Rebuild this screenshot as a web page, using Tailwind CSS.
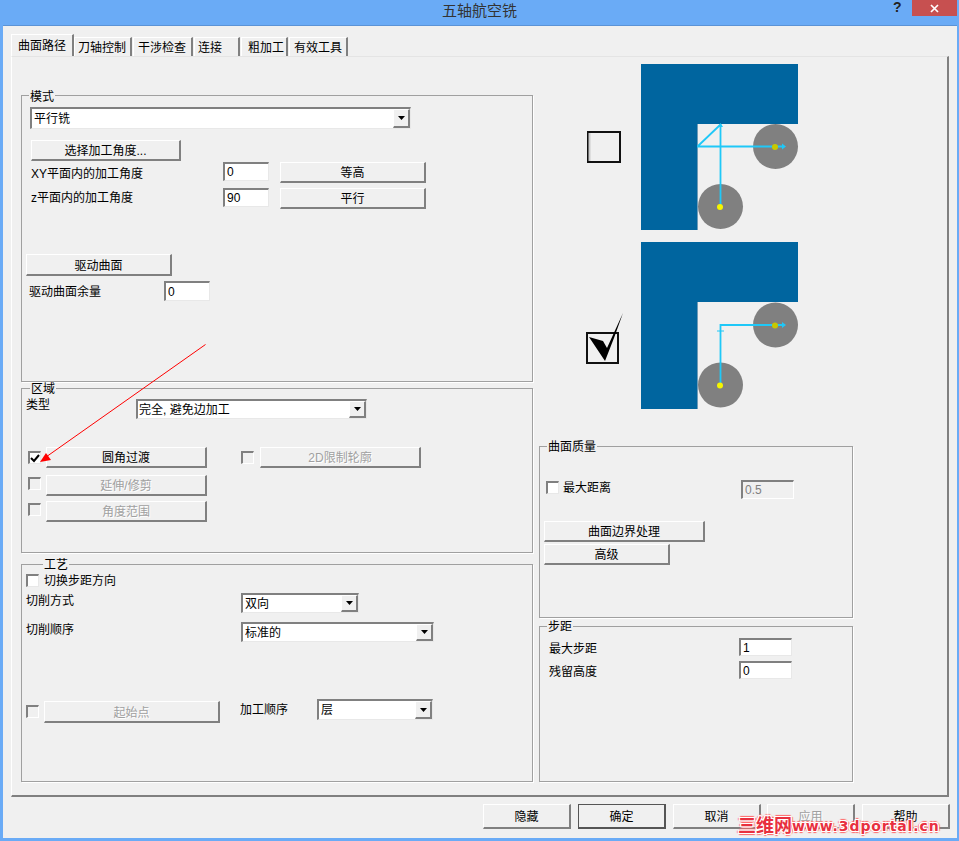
<!DOCTYPE html>
<html lang="zh-CN">
<head>
<meta charset="UTF-8">
<meta name="viewport" content="width=device-width, initial-scale=1.0">
<title>五轴航空铣</title>
<script src="https://cdn.jsdelivr.net/npm/@tailwindcss/browser@4"></script>
</head>
<body class="m-0 overflow-hidden">
<div class="relative w-[959px] h-[841px] overflow-hidden bg-[#6aabf6] text-[12px] leading-[12px] text-black [font-family:'Liberation_Sans','Noto_Sans_CJK_SC',sans-serif]">

  <!-- title bar -->
  <div class="relative h-[25px] flex justify-center pt-[2px] border-b border-transparent">
    <span class="text-[15px] leading-[18px] text-[#333]">五轴航空铣</span>
    <span class="absolute left-[893px] top-0 text-[14px] leading-[14px] font-bold text-[#222]">?</span>
    <div class="absolute left-[912px] top-0 w-[45px] h-[16px] bg-[#c75050] flex items-center justify-center">
      <svg width="9" height="9" viewBox="0 0 9 9"><path d="M1 1L8 8M8 1L1 8" stroke="#fff" stroke-width="1.7"/></svg>
    </div>
  </div>

  <!-- dialog body -->
  <div class="w-[954px] h-[813px] ml-[3px] bg-[#f0f0f0] border-t border-[#5b93d6] pt-[8px]">
    <!-- tabs -->
    <div class="flex items-end h-[22px] ml-[8px]">
      <div class="w-[63px] h-[22px] pl-[6px] pt-[5px] bg-[#f0f0f0] border-t border-l border-white border-r-2 border-r-[#808080]">曲面路径</div>
      <div class="w-[58px] h-[19px] pl-[3px] pt-[4px] border-t border-l border-white border-r-2 border-r-[#808080]">刀轴控制</div>
      <div class="w-[60px] h-[19px] ml-[1px] pl-[4px] pt-[4px] border-t border-l border-white border-r-2 border-r-[#808080]">干涉检查</div>
      <div class="w-[46px] h-[19px] ml-[1px] pl-[3px] pt-[4px] border-t border-l border-white border-r-2 border-r-[#808080]">连接</div>
      <div class="w-[47px] h-[19px] ml-[1px] pl-[6px] pt-[4px] border-t border-l border-white border-r-2 border-r-[#808080]">粗加工</div>
      <div class="w-[59px] h-[19px] ml-[1px] pl-[4px] pt-[4px] border-t border-l border-white border-r-2 border-r-[#808080]">有效工具</div>
    </div>

    <!-- tab panel -->
    <div class="flex w-[938px] h-[741px] ml-[8px] pl-[9px] pt-[38px] border-t border-l border-t-[#e4e4e4] border-l-white border-r-2 border-b-2 border-r-[#808080] border-b-[#808080]">

      <!-- left column -->
      <div class="flex flex-col w-[512px] shrink-0">

        <!-- 模式 -->
        <div class="relative h-[287px] border border-[#a0a0a0] shadow-[1px_1px_0_#fff]">
          <span class="absolute -top-[5px] left-[7px] px-[1px] bg-[#f0f0f0]">模式</span>
          <div class="relative w-[381px] h-[22px] ml-[8px] mt-[11px] pl-[2px] flex items-center bg-white border-t-2 border-l-2 border-t-[#808080] border-l-[#808080] border-r border-b border-r-[#e8e8e8] border-b-[#e8e8e8]">平行铣
            <div class="absolute right-0 top-0 w-[17px] h-[19px] bg-[#f0f0f0] border-t border-l border-white border-r-2 border-b-2 border-r-[#808080] border-b-[#808080] flex items-center justify-center">
              <svg width="7" height="4" viewBox="0 0 7 4"><path d="M0 0H7L3.5 4Z" fill="#000"/></svg>
            </div>
          </div>
          <div class="w-[150px] h-[21px] ml-[9px] mt-[11px] pt-[2px] flex items-center justify-center bg-[#f0f0f0] border-t border-l border-white border-r-2 border-b-2 border-r-[#808080] border-b-[#808080]">选择加工角度...</div>
          <div class="flex ml-[9px] mt-[1px]">
            <span class="w-[192px] mt-[6px]">XY平面内的加工角度</span>
            <input value="0" class="w-[46px] h-[19px] pl-[2px] bg-white outline-none border-t-2 border-l-2 border-t-[#808080] border-l-[#808080] border-r border-b border-r-[#e8e8e8] border-b-[#e8e8e8]">
            <div class="w-[146px] h-[21px] ml-[11px] pt-[2px] flex items-center justify-center border-t border-l border-white border-r-2 border-b-2 border-r-[#808080] border-b-[#808080]">等高</div>
          </div>
          <div class="flex ml-[9px] mt-[5px]">
            <span class="w-[192px] mt-[4px]">z平面内的加工角度</span>
            <input value="90" class="w-[46px] h-[19px] pl-[2px] bg-white outline-none border-t-2 border-l-2 border-t-[#808080] border-l-[#808080] border-r border-b border-r-[#e8e8e8] border-b-[#e8e8e8]">
            <div class="w-[146px] h-[21px] ml-[11px] pt-[2px] flex items-center justify-center border-t border-l border-white border-r-2 border-b-2 border-r-[#808080] border-b-[#808080]">平行</div>
          </div>
          <div class="w-[146px] h-[22px] ml-[4px] mt-[45px] pt-[2px] flex items-center justify-center border-t border-l border-white border-r-2 border-b-2 border-r-[#808080] border-b-[#808080]">驱动曲面</div>
          <div class="flex ml-[7px] mt-[5px]">
            <span class="w-[135px] mt-[5px]">驱动曲面余量</span>
            <input value="0" class="w-[46px] h-[20px] pl-[2px] bg-white outline-none border-t-2 border-l-2 border-t-[#808080] border-l-[#808080] border-r border-b border-r-[#e8e8e8] border-b-[#e8e8e8]">
          </div>
        </div>

        <!-- 区域 -->
        <div class="relative h-[165px] mt-[6px] border border-[#a0a0a0] shadow-[1px_1px_0_#fff]">
          <span class="absolute -top-[6px] left-[8px] px-[1px] bg-[#f0f0f0]">区域</span>
          <div class="flex ml-[4px] mt-[10px]">
            <span class="w-[110px]">类型</span>
            <div class="relative w-[231px] h-[20px] pl-[1px] flex items-center bg-white border-t-2 border-l-2 border-t-[#808080] border-l-[#808080] border-r border-b border-r-[#e8e8e8] border-b-[#e8e8e8]">完全, 避免边加工
              <div class="absolute right-0 top-0 w-[17px] h-[17px] bg-[#f0f0f0] border-t border-l border-white border-r-2 border-b-2 border-r-[#808080] border-b-[#808080] flex items-center justify-center">
                <svg width="7" height="4" viewBox="0 0 7 4"><path d="M0 0H7L3.5 4Z" fill="#000"/></svg>
              </div>
            </div>
          </div>
          <div class="flex ml-[6px] mt-[28px]">
            <div class="w-[13px] h-[13px] mt-[4px] flex items-center justify-center bg-white border-t-2 border-l-2 border-t-[#808080] border-l-[#808080] border-r border-b border-r-[#e8e8e8] border-b-[#e8e8e8]">
              <svg width="10" height="9" viewBox="0 0 10 9"><path d="M1 4L4 7L9 1" fill="none" stroke="#000" stroke-width="2"/></svg>
            </div>
            <div class="w-[161px] h-[21px] ml-[5px] pt-[2px] flex items-center justify-center border-t border-l border-white border-r-2 border-b-2 border-r-[#808080] border-b-[#808080]">圆角过渡</div>
            <div class="w-[13px] h-[13px] mt-[4px] ml-[34px] bg-[#f0f0f0] border-t-2 border-l-2 border-t-[#808080] border-l-[#808080] border-r border-b border-r-white border-b-white"></div>
            <div class="w-[161px] h-[21px] ml-[6px] pt-[2px] flex items-center justify-center text-[#a0a0a0] [text-shadow:1px_1px_0_#fff] border-t border-l border-white border-r-2 border-b-2 border-r-[#808080] border-b-[#808080]">2D限制轮廓</div>
          </div>
          <div class="flex ml-[6px] mt-[7px]">
            <div class="w-[13px] h-[13px] mt-[2px] bg-[#f0f0f0] border-t-2 border-l-2 border-t-[#808080] border-l-[#808080] border-r border-b border-r-white border-b-white"></div>
            <div class="w-[161px] h-[21px] ml-[5px] pt-[2px] flex items-center justify-center text-[#a0a0a0] [text-shadow:1px_1px_0_#fff] border-t border-l border-white border-r-2 border-b-2 border-r-[#808080] border-b-[#808080]">延伸/修剪</div>
          </div>
          <div class="flex ml-[6px] mt-[5px]">
            <div class="w-[13px] h-[13px] mt-[2px] bg-[#f0f0f0] border-t-2 border-l-2 border-t-[#808080] border-l-[#808080] border-r border-b border-r-white border-b-white"></div>
            <div class="w-[161px] h-[21px] ml-[5px] pt-[2px] flex items-center justify-center text-[#a0a0a0] [text-shadow:1px_1px_0_#fff] border-t border-l border-white border-r-2 border-b-2 border-r-[#808080] border-b-[#808080]">角度范围</div>
          </div>
        </div>

        <!-- 工艺 -->
        <div class="relative h-[218px] mt-[11px] border border-[#a0a0a0] shadow-[1px_1px_0_#fff]">
          <span class="absolute -top-[6px] left-[21px] px-[1px] bg-[#f0f0f0]">工艺</span>
          <div class="flex ml-[4px] mt-[9px]">
            <div class="w-[13px] h-[13px] bg-white border-t-2 border-l-2 border-t-[#808080] border-l-[#808080] border-r border-b border-r-[#e8e8e8] border-b-[#e8e8e8]"></div>
            <span class="ml-[5px] mt-[1px]">切换步距方向</span>
          </div>
          <div class="flex ml-[4px] mt-[6px]">
            <span class="w-[215px] mt-[2px]">切削方式</span>
            <div class="relative w-[118px] h-[20px] pl-[2px] flex items-center bg-white border-t-2 border-l-2 border-t-[#808080] border-l-[#808080] border-r border-b border-r-[#e8e8e8] border-b-[#e8e8e8]">双向
              <div class="absolute right-0 top-0 w-[17px] h-[17px] bg-[#f0f0f0] border-t border-l border-white border-r-2 border-b-2 border-r-[#808080] border-b-[#808080] flex items-center justify-center">
                <svg width="7" height="4" viewBox="0 0 7 4"><path d="M0 0H7L3.5 4Z" fill="#000"/></svg>
              </div>
            </div>
          </div>
          <div class="flex ml-[4px] mt-[9px]">
            <span class="w-[215px] mt-[2px]">切削顺序</span>
            <div class="relative w-[193px] h-[20px] pl-[2px] flex items-center bg-white border-t-2 border-l-2 border-t-[#808080] border-l-[#808080] border-r border-b border-r-[#e8e8e8] border-b-[#e8e8e8]">标准的
              <div class="absolute right-0 top-0 w-[17px] h-[17px] bg-[#f0f0f0] border-t border-l border-white border-r-2 border-b-2 border-r-[#808080] border-b-[#808080] flex items-center justify-center">
                <svg width="7" height="4" viewBox="0 0 7 4"><path d="M0 0H7L3.5 4Z" fill="#000"/></svg>
              </div>
            </div>
          </div>
          <div class="flex ml-[4px] mt-[57px]">
            <div class="w-[13px] h-[13px] mt-[6px] bg-[#f0f0f0] border-t-2 border-l-2 border-t-[#808080] border-l-[#808080] border-r border-b border-r-white border-b-white"></div>
            <div class="w-[176px] h-[22px] ml-[5px] mt-[2px] pt-[2px] flex items-center justify-center text-[#a0a0a0] [text-shadow:1px_1px_0_#fff] border-t border-l border-white border-r-2 border-b-2 border-r-[#808080] border-b-[#808080]">起始点</div>
            <span class="w-[77px] ml-[20px] mt-[5px]">加工顺序</span>
            <div class="relative w-[116px] h-[21px] pl-[2px] flex items-center bg-white border-t-2 border-l-2 border-t-[#808080] border-l-[#808080] border-r border-b border-r-[#e8e8e8] border-b-[#e8e8e8]">层
              <div class="absolute right-0 top-0 w-[17px] h-[18px] bg-[#f0f0f0] border-t border-l border-white border-r-2 border-b-2 border-r-[#808080] border-b-[#808080] flex items-center justify-center">
                <svg width="7" height="4" viewBox="0 0 7 4"><path d="M0 0H7L3.5 4Z" fill="#000"/></svg>
              </div>
            </div>
          </div>
        </div>
      </div>

      <!-- right column -->
      <div class="flex flex-col w-[314px] ml-[6px] -mt-[38px] shrink-0">
        <div class="flex flex-col h-[389px] pt-[7px] pl-[46px]">
          <svg width="216" height="168" viewBox="585 64 216 168" class="block">
            <rect x="588" y="132" width="32" height="30" fill="none" stroke="#111" stroke-width="2"/>
            <path d="M589.500 133V161" stroke="#ccc" stroke-width="2"/>
            <path d="M641 64H798V124H697V230H641Z" fill="#00659f"/>
            <path d="M697.500 124V230" stroke="#6f9cb8" stroke-width="1"/>
            <circle cx="775.500" cy="146.500" r="22.500" fill="#808080"/>
            <circle cx="720.500" cy="206.500" r="22.500" fill="#808080"/>
            <path d="M697 146.500H783M720.500 207V124M698 146L720 125" fill="none" stroke="#1fc8f8" stroke-width="1.800"/>
            <path d="M782 143.500L786 146.500L782 149.500Z" fill="#1fc8f8"/>
            <path d="M718 127L720.500 123L723 127Z" fill="#1fc8f8"/>
            <circle cx="775" cy="147" r="3" fill="#c8c800"/>
            <circle cx="720" cy="207" r="3" fill="#f5f500"/>
          </svg>
          <svg width="216" height="168" viewBox="585 242 216 168" class="block mt-[10px]">
            <rect x="587" y="333" width="31" height="30" fill="none" stroke="#111" stroke-width="2"/>
            <path d="M589 337L603 341L607 348L623 313L614 338L605 361Z" fill="#000"/>
            <path d="M641 242H798V302H697V409H641Z" fill="#00659f"/>
            <path d="M697.500 302V409" stroke="#6f9cb8" stroke-width="1"/>
            <circle cx="775.500" cy="325" r="22.500" fill="#808080"/>
            <circle cx="720.500" cy="385" r="22.500" fill="#808080"/>
            <path d="M720.500 385V325H783" fill="none" stroke="#1fc8f8" stroke-width="1.800"/>
            <path d="M782 322L786 325L782 328Z" fill="#1fc8f8"/>
            <path d="M717 331H724M720.500 327V333" stroke="#1fc8f8" stroke-width="1"/>
            <circle cx="775" cy="325.500" r="3" fill="#c8c800"/>
            <circle cx="720" cy="385.500" r="3" fill="#f5f500"/>
          </svg>
        </div>

        <!-- 曲面质量 -->
        <div class="relative h-[172px] border border-[#a0a0a0] shadow-[1px_1px_0_#fff]">
          <span class="absolute -top-[6px] left-[7px] px-[1px] bg-[#f0f0f0]">曲面质量</span>
          <div class="flex ml-[6px] mt-[33px]">
            <div class="w-[13px] h-[13px] mt-[1px] bg-white border-t-2 border-l-2 border-t-[#808080] border-l-[#808080] border-r border-b border-r-[#e8e8e8] border-b-[#e8e8e8]"></div>
            <span class="w-[178px] ml-[4px] mt-[2px]">最大距离</span>
            <input value="0.5" disabled class="w-[53px] h-[19px] pl-[2px] text-[#808080] bg-[#f0f0f0] outline-none border-t-2 border-l-2 border-t-[#808080] border-l-[#808080] border-r border-b border-r-white border-b-white">
          </div>
          <div class="w-[161px] h-[21px] ml-[4px] mt-[22px] pt-[2px] flex items-center justify-center border-t border-l border-white border-r-2 border-b-2 border-r-[#808080] border-b-[#808080]">曲面边界处理</div>
          <div class="w-[126px] h-[21px] ml-[4px] mt-[2px] pt-[2px] flex items-center justify-center border-t border-l border-white border-r-2 border-b-2 border-r-[#808080] border-b-[#808080]">高级</div>
        </div>

        <!-- 步距 -->
        <div class="relative h-[156px] mt-[8px] border border-[#a0a0a0] shadow-[1px_1px_0_#fff]">
          <span class="absolute -top-[6px] left-[7px] px-[1px] bg-[#f0f0f0]">步距</span>
          <div class="flex ml-[9px] mt-[11px]">
            <span class="w-[190px] mt-[5px]">最大步距</span>
            <input value="1" class="w-[53px] h-[18px] pl-[2px] bg-white outline-none border-t-2 border-l-2 border-t-[#808080] border-l-[#808080] border-r border-b border-r-[#e8e8e8] border-b-[#e8e8e8]">
          </div>
          <div class="flex ml-[9px] mt-[5px]">
            <span class="w-[190px] mt-[5px]">残留高度</span>
            <input value="0" class="w-[53px] h-[18px] pl-[2px] bg-white outline-none border-t-2 border-l-2 border-t-[#808080] border-l-[#808080] border-r border-b border-r-[#e8e8e8] border-b-[#e8e8e8]">
          </div>
        </div>
      </div>
    </div>

    <!-- bottom buttons -->
    <div class="flex ml-[480px] mt-[7px] gap-[7px]">
      <div class="w-[88px] h-[25px] pt-[2px] flex items-center justify-center border-t border-l border-white border-r-2 border-b-2 border-r-[#808080] border-b-[#808080]">隐藏</div>
      <div class="w-[88px] h-[25px] pt-[2px] flex items-center justify-center border-t border-l border-t-[#555] border-l-[#555] border-r-2 border-b-2 border-r-[#555] border-b-[#555]">确定</div>
      <div class="w-[88px] h-[25px] pt-[2px] flex items-center justify-center border-t border-l border-white border-r-2 border-b-2 border-r-[#808080] border-b-[#808080]">取消</div>
      <div class="w-[88px] h-[25px] pt-[2px] -ml-[1px] flex items-center justify-center text-[#a0a0a0] [text-shadow:1px_1px_0_#fff] border-t border-l border-white border-r-2 border-b-2 border-r-[#808080] border-b-[#808080]">应用</div>
      <div class="w-[88px] h-[25px] pt-[2px] flex items-center justify-center border-t border-l border-white border-r-2 border-b-2 border-r-[#808080] border-b-[#808080]">帮助</div>
    </div>
  </div>

  <!-- red annotation arrow -->
  <svg class="absolute left-0 top-0 pointer-events-none" width="959" height="841">
    <path d="M205.500 344.500L46 457" stroke="#f00" stroke-width="1"/>
    <path d="M40 462L46 453L51 460Z" fill="#f00"/>
  </svg>

  <!-- watermark -->
  <div class="absolute left-[738px] top-[816px] flex items-center h-[20px] font-bold text-[#e8303f] [text-shadow:1px_0_0_#fff,-1px_0_0_#fff,0_1px_0_#fff,0_-1px_0_#fff,1px_1px_0_#fff,-1px_-1px_0_#fff,1px_-1px_0_#fff,-1px_1px_0_#fff,2px_0_1px_#f66,-2px_0_1px_#f66,0_2px_1px_#f66,0_-2px_1px_#f66]">
    <span class="text-[18px] leading-[20px]">三维网</span>
    <span class="text-[14px] leading-[20px] tracking-[0.900px] [font-family:'DejaVu_Sans',sans-serif]">www.3dportal.cn</span>
  </div>
</div>
</body>
</html>
